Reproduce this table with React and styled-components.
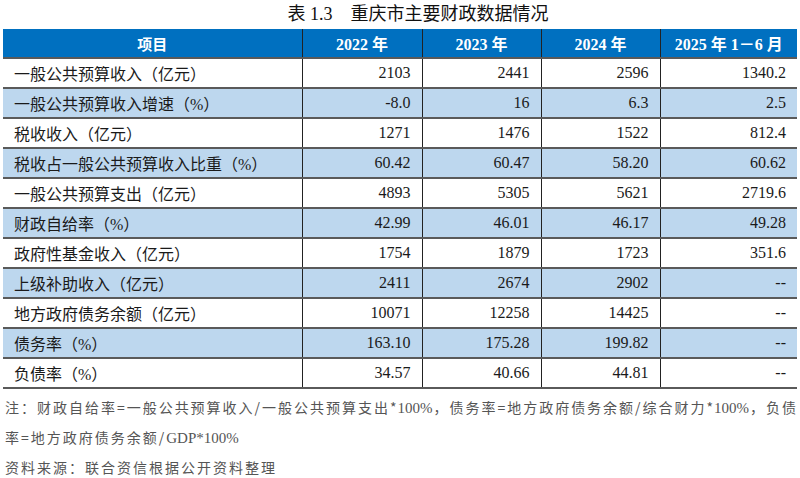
import React from "react";
import styled, { createGlobalStyle } from "styled-components";

const GlobalStyle = createGlobalStyle`
  html, body {
    margin: 0;
    padding: 0;
    background: #fff;
  }
  body {
    width: 800px;
    height: 478px;
    overflow: hidden;
    font-family: "Liberation Serif", "Noto Sans CJK SC", serif;
  }
`;

const Page = styled.div`
  width: 800px;
  padding: 0 3px;
  box-sizing: border-box;
`;

const Title = styled.div`
  height: 29px;
  line-height: 28px;
  text-align: center;
  padding-left: 36px;
  font-size: 18px;
  color: #111;
  font-family: "Liberation Serif", "Noto Sans CJK SC", serif;
  white-space: pre;
`;

const Table = styled.table`
  width: 794px;
  border-collapse: collapse;
  table-layout: fixed;
  font-family: "Liberation Serif", "Noto Sans CJK SC", serif;
  font-size: 16px;
  color: #1a1a1a;
`;

const HeadCell = styled.th`
  background: #0070c0;
  color: #fff;
  font-weight: bold;
  font-size: 16px;
  height: 28px;
  padding: 0;
  text-align: center;
  border-left: 1px solid #222;
  &:first-child {
    border-left: none;
    font-size: 15px;
  }
`;

const Row = styled.tr`
  background: ${(p) => (p.$shade ? "#bdd7ee" : "#fff")};
  border-top: 2px solid #5a5a5a;
  &:last-child {
    border-bottom: 2px solid #5a5a5a;
  }
`;

const Label = styled.td`
  height: 28px;
  padding: 0 0 0 11px;
  text-align: left;
  font-family: "Liberation Serif", "Noto Sans CJK SC", serif;
  font-size: 16px;
  white-space: nowrap;
`;

const Num = styled.td`
  height: 28px;
  padding: 0 11px 0 0;
  text-align: right;
  border-left: 1px solid #222;
`;

const Notes = styled.div`
  padding: 4px 0 0 2px;
  font-family: "Noto Sans CJK SC", sans-serif;
  font-size: 14px;
  letter-spacing: 2px;
  color: #555;
  line-height: 29px;
`;

const NoteLine = styled.div`
  text-align: ${(p) => (p.$full ? "justify" : "left")};
  text-align-last: ${(p) => (p.$full ? "justify" : "left")};
  letter-spacing: ${(p) => (p.$full ? "1px" : "2px")};
  white-space: nowrap;
`;

const Latin = styled.span`
  font-family: "Liberation Serif", serif;
  font-size: 15px;
  letter-spacing: 0;
`;

const rows = [
  ["一般公共预算收入（亿元）", "2103", "2441", "2596", "1340.2"],
  ["一般公共预算收入增速（%）", "-8.0", "16", "6.3", "2.5"],
  ["税收收入（亿元）", "1271", "1476", "1522", "812.4"],
  ["税收占一般公共预算收入比重（%）", "60.42", "60.47", "58.20", "60.62"],
  ["一般公共预算支出（亿元）", "4893", "5305", "5621", "2719.6"],
  ["财政自给率（%）", "42.99", "46.01", "46.17", "49.28"],
  ["政府性基金收入（亿元）", "1754", "1879", "1723", "351.6"],
  ["上级补助收入（亿元）", "2411", "2674", "2902", "--"],
  ["地方政府债务余额（亿元）", "10071", "12258", "14425", "--"],
  ["债务率（%）", "163.10", "175.28", "199.82", "--"],
  ["负债率（%）", "34.57", "40.66", "44.81", "--"],
];

const App = () => {
  return (
    <Page>
      <GlobalStyle />
      <Title>{"表 1.3    重庆市主要财政数据情况"}</Title>
      <Table>
        <colgroup>
          <col style={{ width: 299 }} />
          <col style={{ width: 120 }} />
          <col style={{ width: 119 }} />
          <col style={{ width: 119 }} />
          <col style={{ width: 137 }} />
        </colgroup>
        <thead>
          <tr>
            <HeadCell>项目</HeadCell>
            <HeadCell>2022 年</HeadCell>
            <HeadCell>2023 年</HeadCell>
            <HeadCell>2024 年</HeadCell>
            <HeadCell>2025 年 1－6 月</HeadCell>
          </tr>
        </thead>
        <tbody>
          {rows.map((r, i) => (
            <Row key={r[0]} $shade={i % 2 === 1}>
              <Label>{r[0]}</Label>
              <Num>{r[1]}</Num>
              <Num>{r[2]}</Num>
              <Num>{r[3]}</Num>
              <Num>{r[4]}</Num>
            </Row>
          ))}
        </tbody>
      </Table>
      <Notes>
        <NoteLine $full>
          注：财政自给率=一般公共预算收入/一般公共预算支出*<Latin>100%</Latin>，债务率=地方政府债务余额/综合财力*<Latin>100%</Latin>，负债
        </NoteLine>
        <NoteLine>
          率=地方政府债务余额/<Latin>GDP*100%</Latin>
        </NoteLine>
        <NoteLine>资料来源：联合资信根据公开资料整理</NoteLine>
      </Notes>
    </Page>
  );
};

export default App;
